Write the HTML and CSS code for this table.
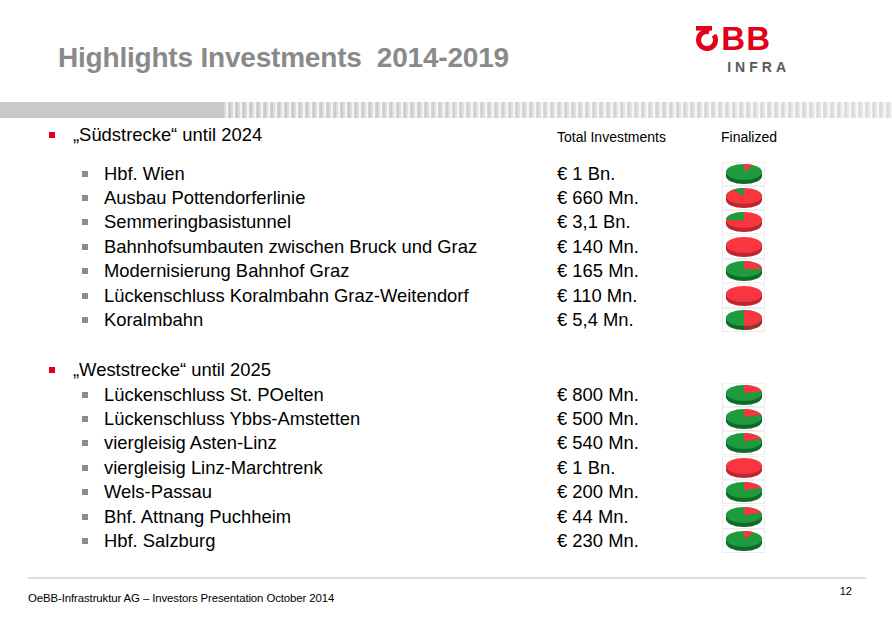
FILE: index.html
```html
<!DOCTYPE html>
<html>
<head>
<meta charset="utf-8">
<link rel="stylesheet" href="styles.css">
</head>
<body>
<svg class="defs" width="0" height="0" aria-hidden="true">
  <defs>
    <symbol id="p-r30" viewBox="0 0 40 22"><ellipse cx="20" cy="9" rx="18" ry="8" class="g"/><path class="r" d="M20 9 L20 1 A18 8 0 0 1 29 2.07 Z"/></symbol>
    <symbol id="p-g40" viewBox="0 0 40 22"><ellipse cx="20" cy="9" rx="18" ry="8" class="r"/><path class="g" d="M20 9 L8.43 2.87 A18 8 0 0 1 20 1 Z"/></symbol>
    <symbol id="p-g90" viewBox="0 0 40 22"><ellipse cx="20" cy="9" rx="18" ry="8" class="r"/><path class="g" d="M20 9 L2 9 A18 8 0 0 1 20 1 Z"/></symbol>
    <symbol id="p-red" viewBox="0 0 40 22"><ellipse cx="20" cy="9" rx="18" ry="8" class="r"/></symbol>
    <symbol id="p-r90" viewBox="0 0 40 22"><ellipse cx="20" cy="9" rx="18" ry="8" class="g"/><path class="r" d="M20 9 L20 1 A18 8 0 0 1 38 9 Z"/></symbol>
    <symbol id="p-half" viewBox="0 0 40 22"><ellipse cx="20" cy="9" rx="18" ry="8" class="g"/><path class="r" d="M20 9 L20 1 A18 8 0 0 1 20 17 Z"/></symbol>
    <symbol id="p-r80" viewBox="0 0 40 22"><ellipse cx="20" cy="9" rx="18" ry="8" class="g"/><path class="r" d="M20 9 L20 1 A18 8 0 0 1 37.73 7.61 Z"/></symbol>
    <symbol id="p-r75" viewBox="0 0 40 22"><ellipse cx="20" cy="9" rx="18" ry="8" class="g"/><path class="r" d="M20 9 L20 1 A18 8 0 0 1 37.39 6.93 Z"/></symbol>
    <symbol id="p-r35" viewBox="0 0 40 22"><ellipse cx="20" cy="9" rx="18" ry="8" class="g"/><path class="r" d="M20 9 L20 1 A18 8 0 0 1 30.32 2.45 Z"/></symbol>
  </defs>
</svg>

<div class="slide">
  <header class="head">
    <h1 class="title">Highlights Investments&nbsp; 2014-2019</h1>
    <div class="logo">
      <div class="logo-top">
        <svg class="logo-o" viewBox="0 0 26 25" width="26" height="25">
          <path d="M19.96 9.12 A8.5 8.5 0 1 1 15.2 5.79" fill="none" stroke="#e2001a" stroke-width="5"/>
          <rect x="2" y="0" width="16" height="4.6" fill="#e2001a"/>
        </svg>
        <span class="logo-bb">BB</span>
      </div>
      <div class="logo-infra">INFRA</div>
    </div>
  </header>

  <div class="bar"><div class="bar-solid"></div><div class="bar-stripes"></div></div>

  <main class="table">
    <div class="row sec first">
      <div class="label"><span class="b-red"></span>„Südstrecke“ until 2024</div>
      <div class="colhead">Total Investments</div>
      <div class="colhead fin">Finalized</div>
    </div>
    <div class="group g1">
      <div class="row"><div class="label"><span class="b-gray"></span>Hbf. Wien</div><div class="val">€ 1 Bn.</div><div class="pie"><svg viewBox="0 0 40 22"><use href="#p-r30" class="dk" y="4"/><use href="#p-r30" class="dk" y="3"/><use href="#p-r30" class="dk" y="2"/><use href="#p-r30" class="dk" y="1"/><use href="#p-r30" class="tp"/></svg></div></div>
      <div class="row"><div class="label"><span class="b-gray"></span>Ausbau Pottendorferlinie</div><div class="val">€ 660 Mn.</div><div class="pie"><svg viewBox="0 0 40 22"><use href="#p-g40" class="dk" y="4"/><use href="#p-g40" class="dk" y="3"/><use href="#p-g40" class="dk" y="2"/><use href="#p-g40" class="dk" y="1"/><use href="#p-g40" class="tp"/></svg></div></div>
      <div class="row"><div class="label"><span class="b-gray"></span>Semmeringbasistunnel</div><div class="val">€ 3,1 Bn.</div><div class="pie"><svg viewBox="0 0 40 22"><use href="#p-g90" class="dk" y="4"/><use href="#p-g90" class="dk" y="3"/><use href="#p-g90" class="dk" y="2"/><use href="#p-g90" class="dk" y="1"/><use href="#p-g90" class="tp"/></svg></div></div>
      <div class="row"><div class="label"><span class="b-gray"></span>Bahnhofsumbauten zwischen Bruck und Graz</div><div class="val">€ 140 Mn.</div><div class="pie"><svg viewBox="0 0 40 22"><use href="#p-red" class="dk" y="4"/><use href="#p-red" class="dk" y="3"/><use href="#p-red" class="dk" y="2"/><use href="#p-red" class="dk" y="1"/><use href="#p-red" class="tp"/></svg></div></div>
      <div class="row"><div class="label"><span class="b-gray"></span>Modernisierung Bahnhof Graz</div><div class="val">€ 165 Mn.</div><div class="pie"><svg viewBox="0 0 40 22"><use href="#p-r90" class="dk" y="4"/><use href="#p-r90" class="dk" y="3"/><use href="#p-r90" class="dk" y="2"/><use href="#p-r90" class="dk" y="1"/><use href="#p-r90" class="tp"/></svg></div></div>
      <div class="row"><div class="label"><span class="b-gray"></span>Lückenschluss Koralmbahn Graz-Weitendorf</div><div class="val">€ 110 Mn.</div><div class="pie"><svg viewBox="0 0 40 22"><use href="#p-red" class="dk" y="4"/><use href="#p-red" class="dk" y="3"/><use href="#p-red" class="dk" y="2"/><use href="#p-red" class="dk" y="1"/><use href="#p-red" class="tp"/></svg></div></div>
      <div class="row"><div class="label"><span class="b-gray"></span>Koralmbahn</div><div class="val">€ 5,4 Mn.</div><div class="pie"><svg viewBox="0 0 40 22"><use href="#p-half" class="dk" y="4"/><use href="#p-half" class="dk" y="3"/><use href="#p-half" class="dk" y="2"/><use href="#p-half" class="dk" y="1"/><use href="#p-half" class="tp"/></svg></div></div>
    </div>

    <div class="row sec second">
      <div class="label"><span class="b-red"></span>„Weststrecke“ until 2025</div>
    </div>
    <div class="group">
      <div class="row"><div class="label"><span class="b-gray"></span>Lückenschluss St. POelten</div><div class="val">€ 800 Mn.</div><div class="pie"><svg viewBox="0 0 40 22"><use href="#p-r80" class="dk" y="4"/><use href="#p-r80" class="dk" y="3"/><use href="#p-r80" class="dk" y="2"/><use href="#p-r80" class="dk" y="1"/><use href="#p-r80" class="tp"/></svg></div></div>
      <div class="row"><div class="label"><span class="b-gray"></span>Lückenschluss Ybbs-Amstetten</div><div class="val">€ 500 Mn.</div><div class="pie"><svg viewBox="0 0 40 22"><use href="#p-r75" class="dk" y="4"/><use href="#p-r75" class="dk" y="3"/><use href="#p-r75" class="dk" y="2"/><use href="#p-r75" class="dk" y="1"/><use href="#p-r75" class="tp"/></svg></div></div>
      <div class="row"><div class="label"><span class="b-gray"></span>viergleisig Asten-Linz</div><div class="val">€ 540 Mn.</div><div class="pie"><svg viewBox="0 0 40 22"><use href="#p-r75" class="dk" y="4"/><use href="#p-r75" class="dk" y="3"/><use href="#p-r75" class="dk" y="2"/><use href="#p-r75" class="dk" y="1"/><use href="#p-r75" class="tp"/></svg></div></div>
      <div class="row"><div class="label"><span class="b-gray"></span>viergleisig Linz-Marchtrenk</div><div class="val">€ 1 Bn.</div><div class="pie"><svg viewBox="0 0 40 22"><use href="#p-red" class="dk" y="4"/><use href="#p-red" class="dk" y="3"/><use href="#p-red" class="dk" y="2"/><use href="#p-red" class="dk" y="1"/><use href="#p-red" class="tp"/></svg></div></div>
      <div class="row"><div class="label"><span class="b-gray"></span>Wels-Passau</div><div class="val">€ 200 Mn.</div><div class="pie"><svg viewBox="0 0 40 22"><use href="#p-r75" class="dk" y="4"/><use href="#p-r75" class="dk" y="3"/><use href="#p-r75" class="dk" y="2"/><use href="#p-r75" class="dk" y="1"/><use href="#p-r75" class="tp"/></svg></div></div>
      <div class="row"><div class="label"><span class="b-gray"></span>Bhf. Attnang Puchheim</div><div class="val">€ 44 Mn.</div><div class="pie"><svg viewBox="0 0 40 22"><use href="#p-r75" class="dk" y="4"/><use href="#p-r75" class="dk" y="3"/><use href="#p-r75" class="dk" y="2"/><use href="#p-r75" class="dk" y="1"/><use href="#p-r75" class="tp"/></svg></div></div>
      <div class="row"><div class="label"><span class="b-gray"></span>Hbf. Salzburg</div><div class="val">€ 230 Mn.</div><div class="pie"><svg viewBox="0 0 40 22"><use href="#p-r35" class="dk" y="4"/><use href="#p-r35" class="dk" y="3"/><use href="#p-r35" class="dk" y="2"/><use href="#p-r35" class="dk" y="1"/><use href="#p-r35" class="tp"/></svg></div></div>
    </div>
  </main>

  <footer class="foot">
    <div class="foot-text">OeBB-Infrastruktur AG – Investors Presentation October 2014</div>
    <div class="page">12</div>
  </footer>
</div>
</body>
</html>
```

FILE: styles.css
```css
* { box-sizing: border-box; }
html, body { margin: 0; padding: 0; background: #fff; }
body { width: 892px; height: 618px; overflow: hidden; font-family: "Liberation Sans", Arial, sans-serif; color: #000; }
.defs { position: absolute; width: 0; height: 0; }

.slide { width: 892px; height: 618px; display: flex; flex-direction: column; }

.head { height: 102px; display: flex; justify-content: space-between; align-items: flex-start; }
.title {
  margin: 42px 0 0 58px;
  font-family: "Liberation Sans", Arial, sans-serif;
  font-weight: bold;
  font-size: 28px;
  line-height: 32px;
  color: #8a8a8a;
  letter-spacing: -0.2px;
  white-space: pre;
}
.logo { margin: 26px 106px 0 0; display: flex; flex-direction: column; align-items: flex-end; }
.logo-top { display: flex; align-items: center; height: 25px; margin-right: 16px; }
.logo-o { display: block; margin-right: 1px; }
.logo-bb { font-family: "Liberation Sans", Arial, sans-serif; font-weight: bold; font-size: 33px; line-height: 25px; color: #e2001a; letter-spacing: 1px; margin-right: -1px; }
.logo-infra { margin-top: 9px; font-weight: bold; font-size: 14px; line-height: 14px; color: #5a5a5a; letter-spacing: 4px; margin-right: -4px; }

.bar { height: 16px; display: flex; }
.bar-solid { width: 222px; background: #c9c9c9; }
.bar-stripes {
  flex: 1;
  background:
    linear-gradient(to right, rgba(255,255,255,0) 0%, rgba(255,255,255,0.35) 100%),
    repeating-linear-gradient(to right, #c9c9c9 0 2px, #dcdcdc 2px 4px, #f4f4f4 4px 6px, #d2d2d2 6px 7px);
}

.table { padding-left: 48px; padding-top: 5px; }
.row { display: grid; grid-template-columns: 509px 164px 60px; height: 24.4px; align-items: center; font-size: 18.4px; }
.label { display: flex; align-items: center; white-space: nowrap; padding-left: 34px; }
.sec .label { padding-left: 1px; }
.b-red { width: 6px; height: 6px; background: #e2001a; margin-right: 18px; flex: none; }
.b-gray { width: 6px; height: 6px; background: #8c8c8c; margin-right: 16px; flex: none; }
.colhead { font-size: 14px; padding-top: 3px; white-space: nowrap; }
.g1 { margin-top: 14px; }
.second { margin-top: 26px; }
.val { white-space: nowrap; }
.pie { width: 43px; height: 24px; border: 1px solid #ececec; border-top-color: #f2f2f2; margin-left: 1px; display: flex; align-items: center; justify-content: center; }
.pie svg { width: 40px; height: 22px; display: block; }
.g { fill: var(--g); }
.r { fill: var(--r); }
.tp { --g: #1e9b3c; --r: #f7363f; }
.dk { --g: #0e6a27; --r: #bd2630; }

.foot { margin: auto 26px 0 28px; height: 41px; border-top: 2px solid #dcdcdc; display: flex; justify-content: space-between; }
.foot-text { font-size: 11.4px; margin-top: 13px; letter-spacing: -0.1px; }
.page { font-size: 11px; margin-top: 6px; margin-right: 14px; }
```
